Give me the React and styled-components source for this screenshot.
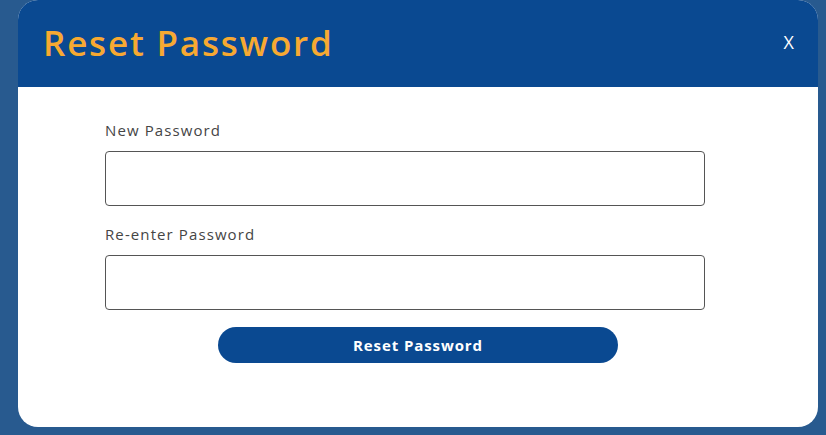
import React from "react";
import styled, { createGlobalStyle } from "styled-components";

const GlobalStyle = createGlobalStyle`
  html, body {
    margin: 0;
    padding: 0;
    background: #285a8f;
    font-family: "Open Sans", "Liberation Sans", sans-serif;
  }
`;

const Page = styled.div`
  width: 826px;
  height: 435px;
  overflow: hidden;
  padding-left: 18px;
  box-sizing: border-box;
`;

const Modal = styled.div`
  width: 800px;
  height: 427px;
  background: #ffffff;
  border-radius: 20px;
  overflow: hidden;
  display: flex;
  flex-direction: column;
`;

const Header = styled.div`
  height: 87px;
  background: #0a4991;
  display: flex;
  align-items: center;
  justify-content: space-between;
  padding: 0 24px 0 25px;
  box-sizing: border-box;
`;

const Title = styled.h1`
  margin: 0;
  padding-bottom: 2px;
  color: #f7a932;
  font-size: 35px;
  font-weight: 600;
  letter-spacing: 1.8px;
`;

const Close = styled.button`
  border: none;
  background: none;
  color: #ffffff;
  font-family: "Open Sans", "Liberation Sans", sans-serif;
  font-size: 18px;
  font-weight: 400;
  padding: 0;
  margin-bottom: 4px;
  cursor: pointer;
`;

const Body = styled.div`
  padding: 33px 0 0 87px;
  display: flex;
  flex-direction: column;
`;

const Field = styled.div`
  width: 600px;
  display: flex;
  flex-direction: column;
  margin-bottom: ${(p) => p.$gap}px;
`;

const Label = styled.label`
  color: #454545;
  font-size: 15px;
  font-weight: 400;
  line-height: 20px;
  margin-bottom: 11px;
  letter-spacing: 1.1px;
`;

const Input = styled.input`
  height: 55px;
  border: 1px solid #555555;
  border-radius: 4px;
  box-sizing: border-box;
  outline: none;
`;

const Submit = styled.button`
  align-self: flex-start;
  margin-left: 113px;
  width: 400px;
  height: 36px;
  border: none;
  border-radius: 18px;
  background: #0a4991;
  color: #ffffff;
  font-family: "Open Sans", "Liberation Sans", sans-serif;
  font-size: 15px;
  font-weight: 700;
  letter-spacing: 0.9px;
  cursor: pointer;
`;

export default function App() {
  return (
    <>
      <GlobalStyle />
      <Page>
        <Modal>
          <Header>
            <Title>Reset Password</Title>
            <Close>X</Close>
          </Header>
          <Body>
            <Field $gap={18}>
              <Label>New Password</Label>
              <Input type="password" />
            </Field>
            <Field $gap={17}>
              <Label>Re-enter Password</Label>
              <Input type="password" />
            </Field>
            <Submit>Reset Password</Submit>
          </Body>
        </Modal>
      </Page>
    </>
  );
}
